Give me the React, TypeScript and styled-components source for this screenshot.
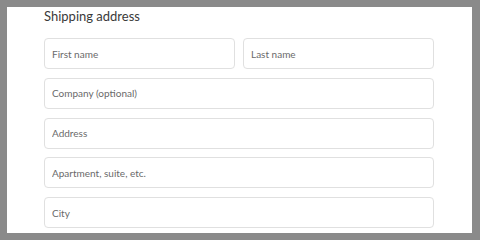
import styled, { createGlobalStyle } from "styled-components";

const GlobalStyle = createGlobalStyle`
  html, body {
    margin: 0;
    padding: 0;
    background: #8a8a8a;
    width: 480px;
    height: 240px;
    overflow: hidden;
  }
  * { box-sizing: border-box; }
`;

const Frame = styled.div`
  width: 480px;
  height: 240px;
  padding: 7px 8px 7px 7px;
`;

const Panel = styled.div`
  height: 100%;
  background: #ffffff;
  padding: 0 38px 0 37px;
  font-family: Lato, "Open Sans", sans-serif;
  overflow: hidden;
`;

const Title = styled.h2`
  margin: 0;
  padding-top: 1px;
  height: 31px;
  font-size: 13px;
  font-weight: 400;
  line-height: 17px;
  color: #3a3a3a;
`;

const Fields = styled.div`
  display: flex;
  flex-direction: column;
  gap: 8.75px;
`;

const Row = styled.div`
  display: grid;
  grid-template-columns: 1fr 1fr;
  gap: 8px;
`;

const Field = styled.input`
  display: block;
  width: 100%;
  height: 31px;
  border: 1px solid #e0e0e0;
  border-radius: 4px;
  padding: 0 7px;
  font-family: inherit;
  font-size: 10px;
  color: #333333;
  background: #ffffff;
  outline: none;

  &::placeholder {
    color: #6a6a6a;
  }
`;

export default function App() {
  return (
    <>
      <GlobalStyle />
      <Frame>
        <Panel>
          <Title>Shipping address</Title>
          <Fields>
            <Row>
              <Field placeholder="First name" />
              <Field placeholder="Last name" />
            </Row>
            <Field placeholder="Company (optional)" />
            <Field placeholder="Address" />
            <Field placeholder="Apartment, suite, etc." />
            <Field placeholder="City" />
          </Fields>
        </Panel>
      </Frame>
    </>
  );
}
